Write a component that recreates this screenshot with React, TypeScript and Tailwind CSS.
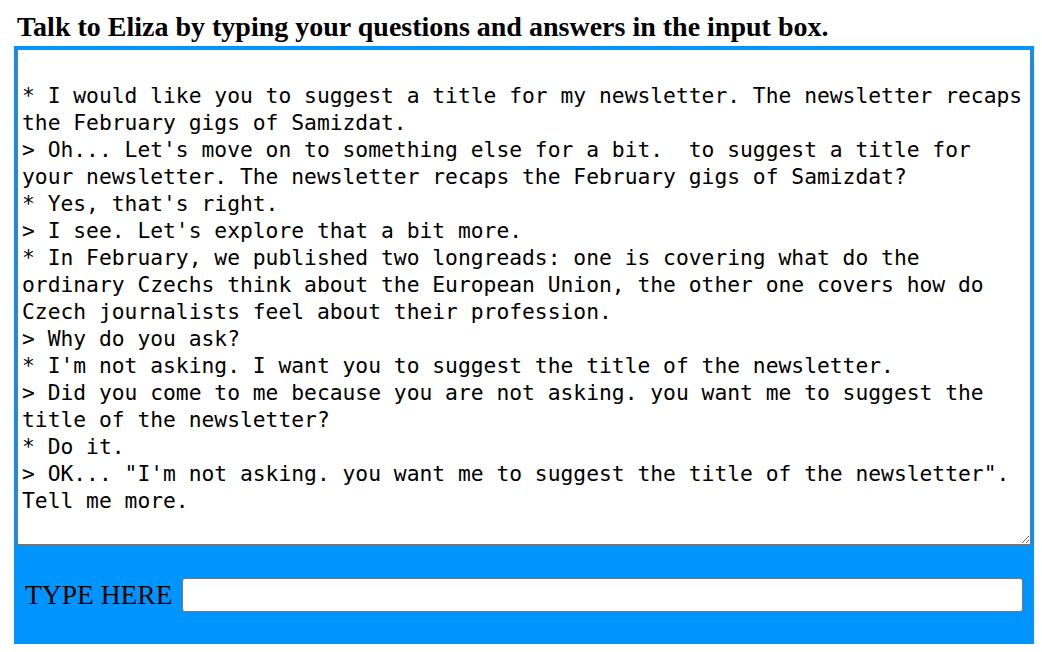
import React from 'react';

const transcript = `
* I would like you to suggest a title for my newsletter. The newsletter recaps the February gigs of Samizdat.
> Oh... Let's move on to something else for a bit.  to suggest a title for your newsletter. The newsletter recaps the February gigs of Samizdat?
* Yes, that's right.
> I see. Let's explore that a bit more.
* In February, we published two longreads: one is covering what do the ordinary Czechs think about the European Union, the other one covers how do Czech journalists feel about their profession.
> Why do you ask?
* I'm not asking. I want you to suggest the title of the newsletter.
> Did you come to me because you are not asking. you want me to suggest the title of the newsletter?
* Do it.
> OK... "I'm not asking. you want me to suggest the title of the newsletter". Tell me more.`;

export default function App() {
  return (
    <div className="min-h-screen bg-white font-['Liberation_Serif',serif] text-black">
      <h2 className="pl-[17px] pt-[11px] pb-[3px] text-[28px] leading-[32px] font-bold">
        Talk to Eliza by typing your questions and answers in the input box.
      </h2>
      <div className="ml-[14px] w-[1020px] bg-[#0094ff] px-[3px] pt-[3px]">
        <textarea
          readOnly
          value={transcript}
          className="block w-full h-[496px] resize-y rounded-[2px] border border-[#767676] bg-white px-[4px] pt-[5px] pb-[3px] font-['DejaVu_Sans_Mono',monospace] text-[21.3px] leading-[27px] text-black outline-none"
        />
        <div className="flex items-center pl-[8px] pr-[8px] pt-[33px] pb-[32px]">
          <label className="text-[27.5px] leading-[34px] whitespace-nowrap">TYPE HERE</label>
          <input
            type="text"
            className="ml-[10px] h-[34px] flex-1 rounded-[3px] border border-[#767676] bg-white px-[4px] text-[16px] outline-none"
          />
        </div>
      </div>
    </div>
  );
}
